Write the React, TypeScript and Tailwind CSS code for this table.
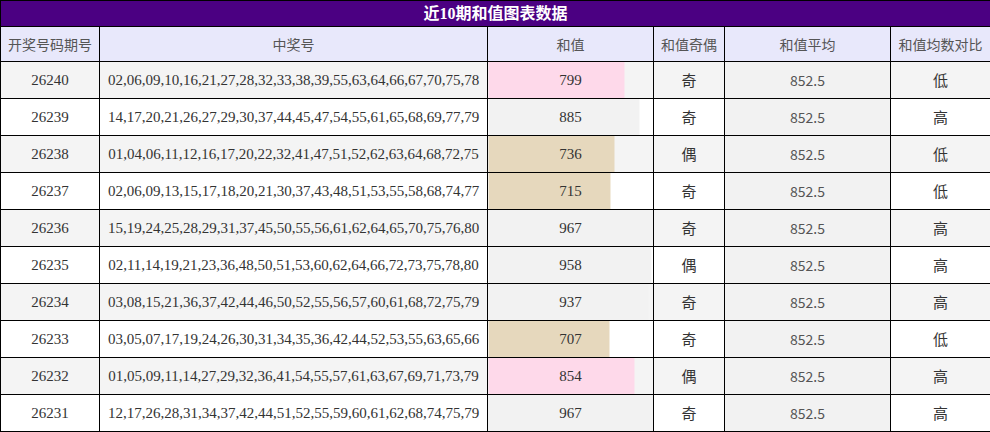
import React from 'react';

interface Row {
    issue: string;
    nums: string;
    sum: number;
    bar: string;
    parity: '奇' | '偶';
    cmp: '高' | '低';
}

const rows: Row[] = [
    { issue: '26240', nums: '02,06,09,10,16,21,27,28,32,33,38,39,55,63,64,66,67,70,75,78', sum: 799, bar: '#fed9ea', parity: '奇', cmp: '低' },
    { issue: '26239', nums: '14,17,20,21,26,27,29,30,37,44,45,47,54,55,61,65,68,69,77,79', sum: 885, bar: '#f2f2f2', parity: '奇', cmp: '高' },
    { issue: '26238', nums: '01,04,06,11,12,16,17,20,22,32,41,47,51,52,62,63,64,68,72,75', sum: 736, bar: '#e6d8bd', parity: '偶', cmp: '低' },
    { issue: '26237', nums: '02,06,09,13,15,17,18,20,21,30,37,43,48,51,53,55,58,68,74,77', sum: 715, bar: '#e6d8bd', parity: '奇', cmp: '低' },
    { issue: '26236', nums: '15,19,24,25,28,29,31,37,45,50,55,56,61,62,64,65,70,75,76,80', sum: 967, bar: '#f2f2f2', parity: '奇', cmp: '高' },
    { issue: '26235', nums: '02,11,14,19,21,23,36,48,50,51,53,60,62,64,66,72,73,75,78,80', sum: 958, bar: '#f2f2f2', parity: '偶', cmp: '高' },
    { issue: '26234', nums: '03,08,15,21,36,37,42,44,46,50,52,55,56,57,60,61,68,72,75,79', sum: 937, bar: '#f2f2f2', parity: '奇', cmp: '高' },
    { issue: '26233', nums: '03,05,07,17,19,24,26,30,31,34,35,36,42,44,52,53,55,63,65,66', sum: 707, bar: '#e6d8bd', parity: '奇', cmp: '低' },
    { issue: '26232', nums: '01,05,09,11,14,27,29,32,36,41,54,55,57,61,63,67,69,71,73,79', sum: 854, bar: '#fed9ea', parity: '偶', cmp: '高' },
    { issue: '26231', nums: '12,17,26,28,31,34,37,42,44,51,52,55,59,60,61,62,68,74,75,79', sum: 967, bar: '#f2f2f2', parity: '奇', cmp: '高' },
];

const maxSum = Math.max(...rows.map((r) => r.sum));

const serif = "font-['Liberation_Serif','Noto_Sans_CJK_SC',serif]";
const sans = "font-['Noto_Sans_CJK_SC',sans-serif]";

export default function App() {
    return (
        <div className="w-[990px] bg-white">
            <table className="w-[990px] table-fixed border-collapse text-center">
                <colgroup>
                    <col className="w-[99px]" />
                    <col className="w-[388px]" />
                    <col className="w-[166px]" />
                    <col className="w-[71px]" />
                    <col className="w-[166px]" />
                    <col className="w-[100px]" />
                </colgroup>
                <thead>
                    <tr>
                        <th
                            colSpan={6}
                            className={`h-[26px] border border-black bg-[#4b0082] p-0 text-[16px] leading-[20px] font-bold text-white ${serif}`}
                        >
                            近10期和值图表数据
                        </th>
                    </tr>
                    <tr className={`bg-[#e8e8fb] text-[14px] font-normal text-[#555] ${sans}`}>
                        {['开奖号码期号', '中奖号', '和值', '和值奇偶', '和值平均', '和值均数对比'].map((h) => (
                            <th key={h} className="h-[35px] border border-black p-0 font-normal">
                                {h}
                            </th>
                        ))}
                    </tr>
                </thead>
                <tbody>
                    {rows.map((r, i) => {
                        const base = i % 2 === 0 ? '#f4f4f4' : '#ffffff';
                        const pct = (r.sum / maxSum) * 100;
                        return (
                            <tr key={r.issue} className={i % 2 === 0 ? 'bg-[#f4f4f4]' : 'bg-white'}>
                                <td className={`h-[37px] border border-black p-0 text-[15px] leading-[20px] text-[#333] ${serif}`}>{r.issue}</td>
                                <td className={`border border-black p-0 text-[15px] leading-[20px] text-[#333] ${serif}`}>{r.nums}</td>
                                <td
                                    className={`border border-black p-0 text-[15px] leading-[20px] text-[#333] ${serif}`}
                                    style={{ background: `linear-gradient(to right, ${r.bar} ${pct}%, ${base} ${pct}%)` }}
                                >
                                    {r.sum}
                                </td>
                                <td className={`border border-black p-0 text-[15px] leading-[20px] text-[#333] ${sans}`}>{r.parity}</td>
                                <td className={`border border-black bg-[#f2f2f2] p-0 text-[14px] leading-[20px] text-[#555] ${sans}`}>852.5</td>
                                <td className={`border border-black p-0 text-[15px] leading-[20px] text-[#333] ${sans}`}>{r.cmp}</td>
                            </tr>
                        );
                    })}
                </tbody>
            </table>
        </div>
    );
}
